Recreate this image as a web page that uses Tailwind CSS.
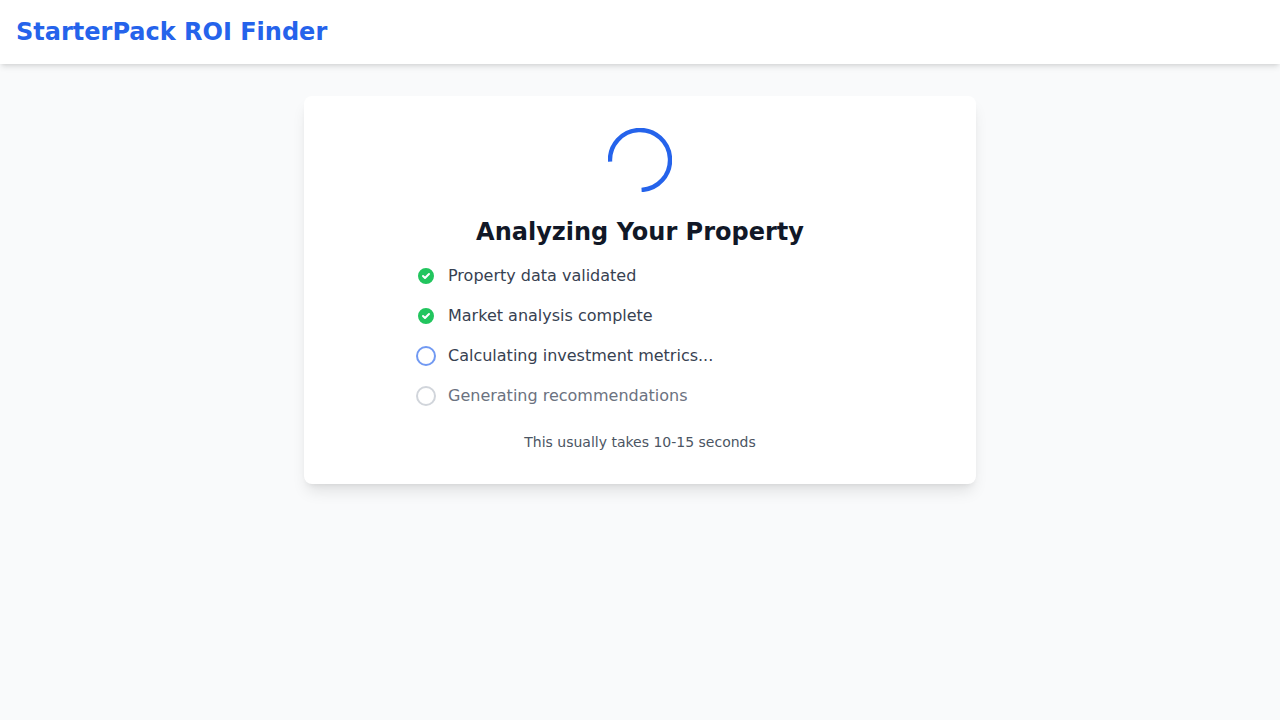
<!DOCTYPE html>
<html lang="en">
<head>
<meta charset="utf-8">
<meta name="viewport" content="width=device-width, initial-scale=1">
<title>StarterPack ROI Finder</title>
<script src="https://cdn.jsdelivr.net/npm/@tailwindcss/browser@4"></script>
</head>
<body class="min-h-screen bg-[#f9fafb] font-['DejaVu_Sans',sans-serif] text-[#111827]">
  <header class="bg-white shadow-md">
    <div class="px-4 py-4">
      <h1 class="text-2xl font-bold text-[#2563eb]">StarterPack ROI Finder</h1>
    </div>
  </header>
  <main class="mx-auto max-w-2xl pt-8">
    <section class="rounded-lg bg-white p-8 text-center shadow-lg" aria-live="polite">
      <svg class="mx-auto mb-6 size-16 text-[#2563eb]" viewBox="0 0 64 64" fill="none" stroke="currentColor" stroke-width="4.4" aria-hidden="true">
        <path d="M2 32a30 30 0 1 1 30 30" transform="rotate(-3 32 32)"/>
      </svg>
      <h2 class="mb-4 text-2xl font-bold">Analyzing Your Property</h2>
      <ul class="mx-auto mb-6 flex max-w-md flex-col gap-4 text-left text-[#374151]">
        <li class="flex items-center gap-3">
          <svg class="size-5 shrink-0 text-[#22c55e]" viewBox="0 0 20 20" fill="currentColor" aria-hidden="true"><path fill-rule="evenodd" clip-rule="evenodd" d="M10 18a8 8 0 100-16 8 8 0 000 16zm3.707-9.293a1 1 0 00-1.414-1.414L9 10.586 7.707 9.293a1 1 0 00-1.414 1.414l2 2a1 1 0 001.414 0l4-4z"/></svg>
          <span>Property data validated</span>
        </li>
        <li class="flex items-center gap-3">
          <svg class="size-5 shrink-0 text-[#22c55e]" viewBox="0 0 20 20" fill="currentColor" aria-hidden="true"><path fill-rule="evenodd" clip-rule="evenodd" d="M10 18a8 8 0 100-16 8 8 0 000 16zm3.707-9.293a1 1 0 00-1.414-1.414L9 10.586 7.707 9.293a1 1 0 00-1.414 1.414l2 2a1 1 0 001.414 0l4-4z"/></svg>
          <span>Market analysis complete</span>
        </li>
        <li class="flex items-center gap-3">
          <span class="size-5 shrink-0 rounded-full border-2 border-[#2563eb]/65"></span>
          <span>Calculating investment metrics...</span>
        </li>
        <li class="flex items-center gap-3 text-[#6b7280]">
          <span class="size-5 shrink-0 rounded-full border-2 border-[#d1d5db]"></span>
          <span>Generating recommendations</span>
        </li>
      </ul>
      <p class="text-sm text-[#4b5563]">This usually takes 10-15 seconds</p>
    </section>
  </main>
</body>
</html>
